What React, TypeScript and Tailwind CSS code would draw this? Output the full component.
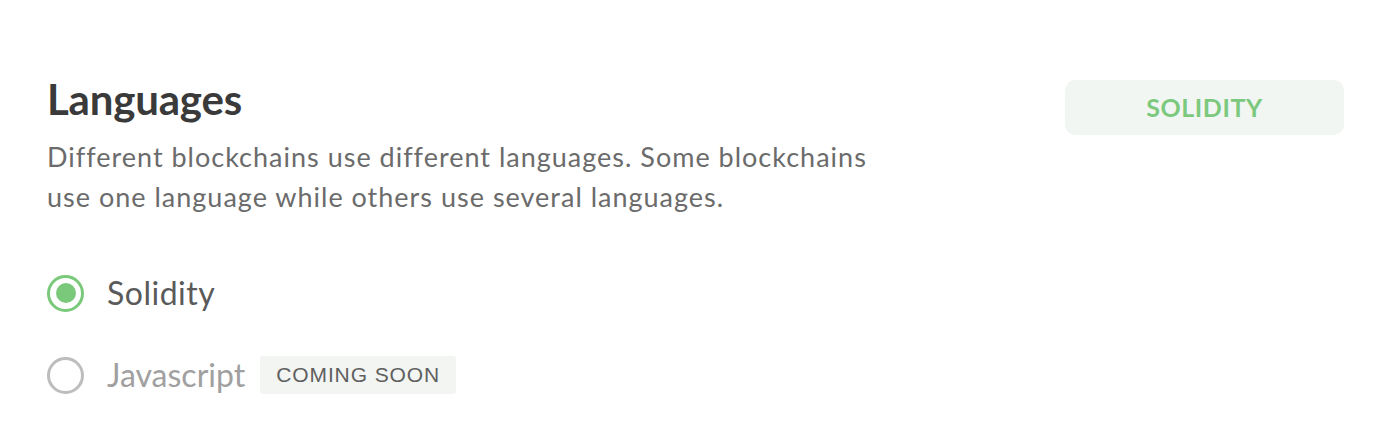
export default function App() {
  return (
    <div
      className="w-[1400px] h-[443px] bg-white"
      style={{ fontFamily: "Lato, 'Open Sans', sans-serif" }}
    >
      <div className="flex justify-between pl-[47px] pr-[56px] pt-[75px]">
        <div className="w-[880px]">
          <h2 className="text-[42px] leading-[48px] font-bold text-[#3a3a3a] tracking-[-0.2px]">
            Languages
          </h2>
          <p className="mt-[14px] w-[870px] text-[27px] leading-[40px] text-[#6b6b6b] tracking-[1px]">
            Different blockchains use different languages. Some blockchains
            <br />
            use one language while others use several languages.
          </p>

          <div className="mt-[58px] flex flex-col gap-[46px]">
            {/* Selected */}
            <label className="flex items-center h-[36px]">
              <span className="w-[37px] h-[37px] rounded-full border-[3px] border-[#7ac97a] flex items-center justify-center">
                <span className="w-[20px] h-[20px] rounded-full bg-[#7ac97a]" />
              </span>
              <span className="ml-[23px] text-[32px] text-[#5a5a5a] tracking-[0.5px]">Solidity</span>
            </label>

            {/* Disabled */}
            <label className="flex items-center h-[36px]">
              <span className="w-[37px] h-[37px] rounded-full border-[3px] border-[#bdbdbd]" />
              <span className="ml-[23px] text-[32px] text-[#a0a0a0]">Javascript</span>
              <span
                className="ml-[15px] h-[38px] px-[16px] flex items-center bg-[#f2f5f2] rounded-[3px] text-[21px] text-[#5f5f5f] tracking-[0.9px]"
                style={{ fontFamily: "'Liberation Sans', Arial, sans-serif" }}
              >
                COMING SOON
              </span>
            </label>
          </div>
        </div>

        <div className="mt-[5px] w-[279px] h-[55px] rounded-[10px] bg-[#f2f6f3] flex items-center justify-center text-[25px] font-bold text-[#7cc97e] tracking-[0.6px]">
          SOLIDITY
        </div>
      </div>
    </div>
  );
}
